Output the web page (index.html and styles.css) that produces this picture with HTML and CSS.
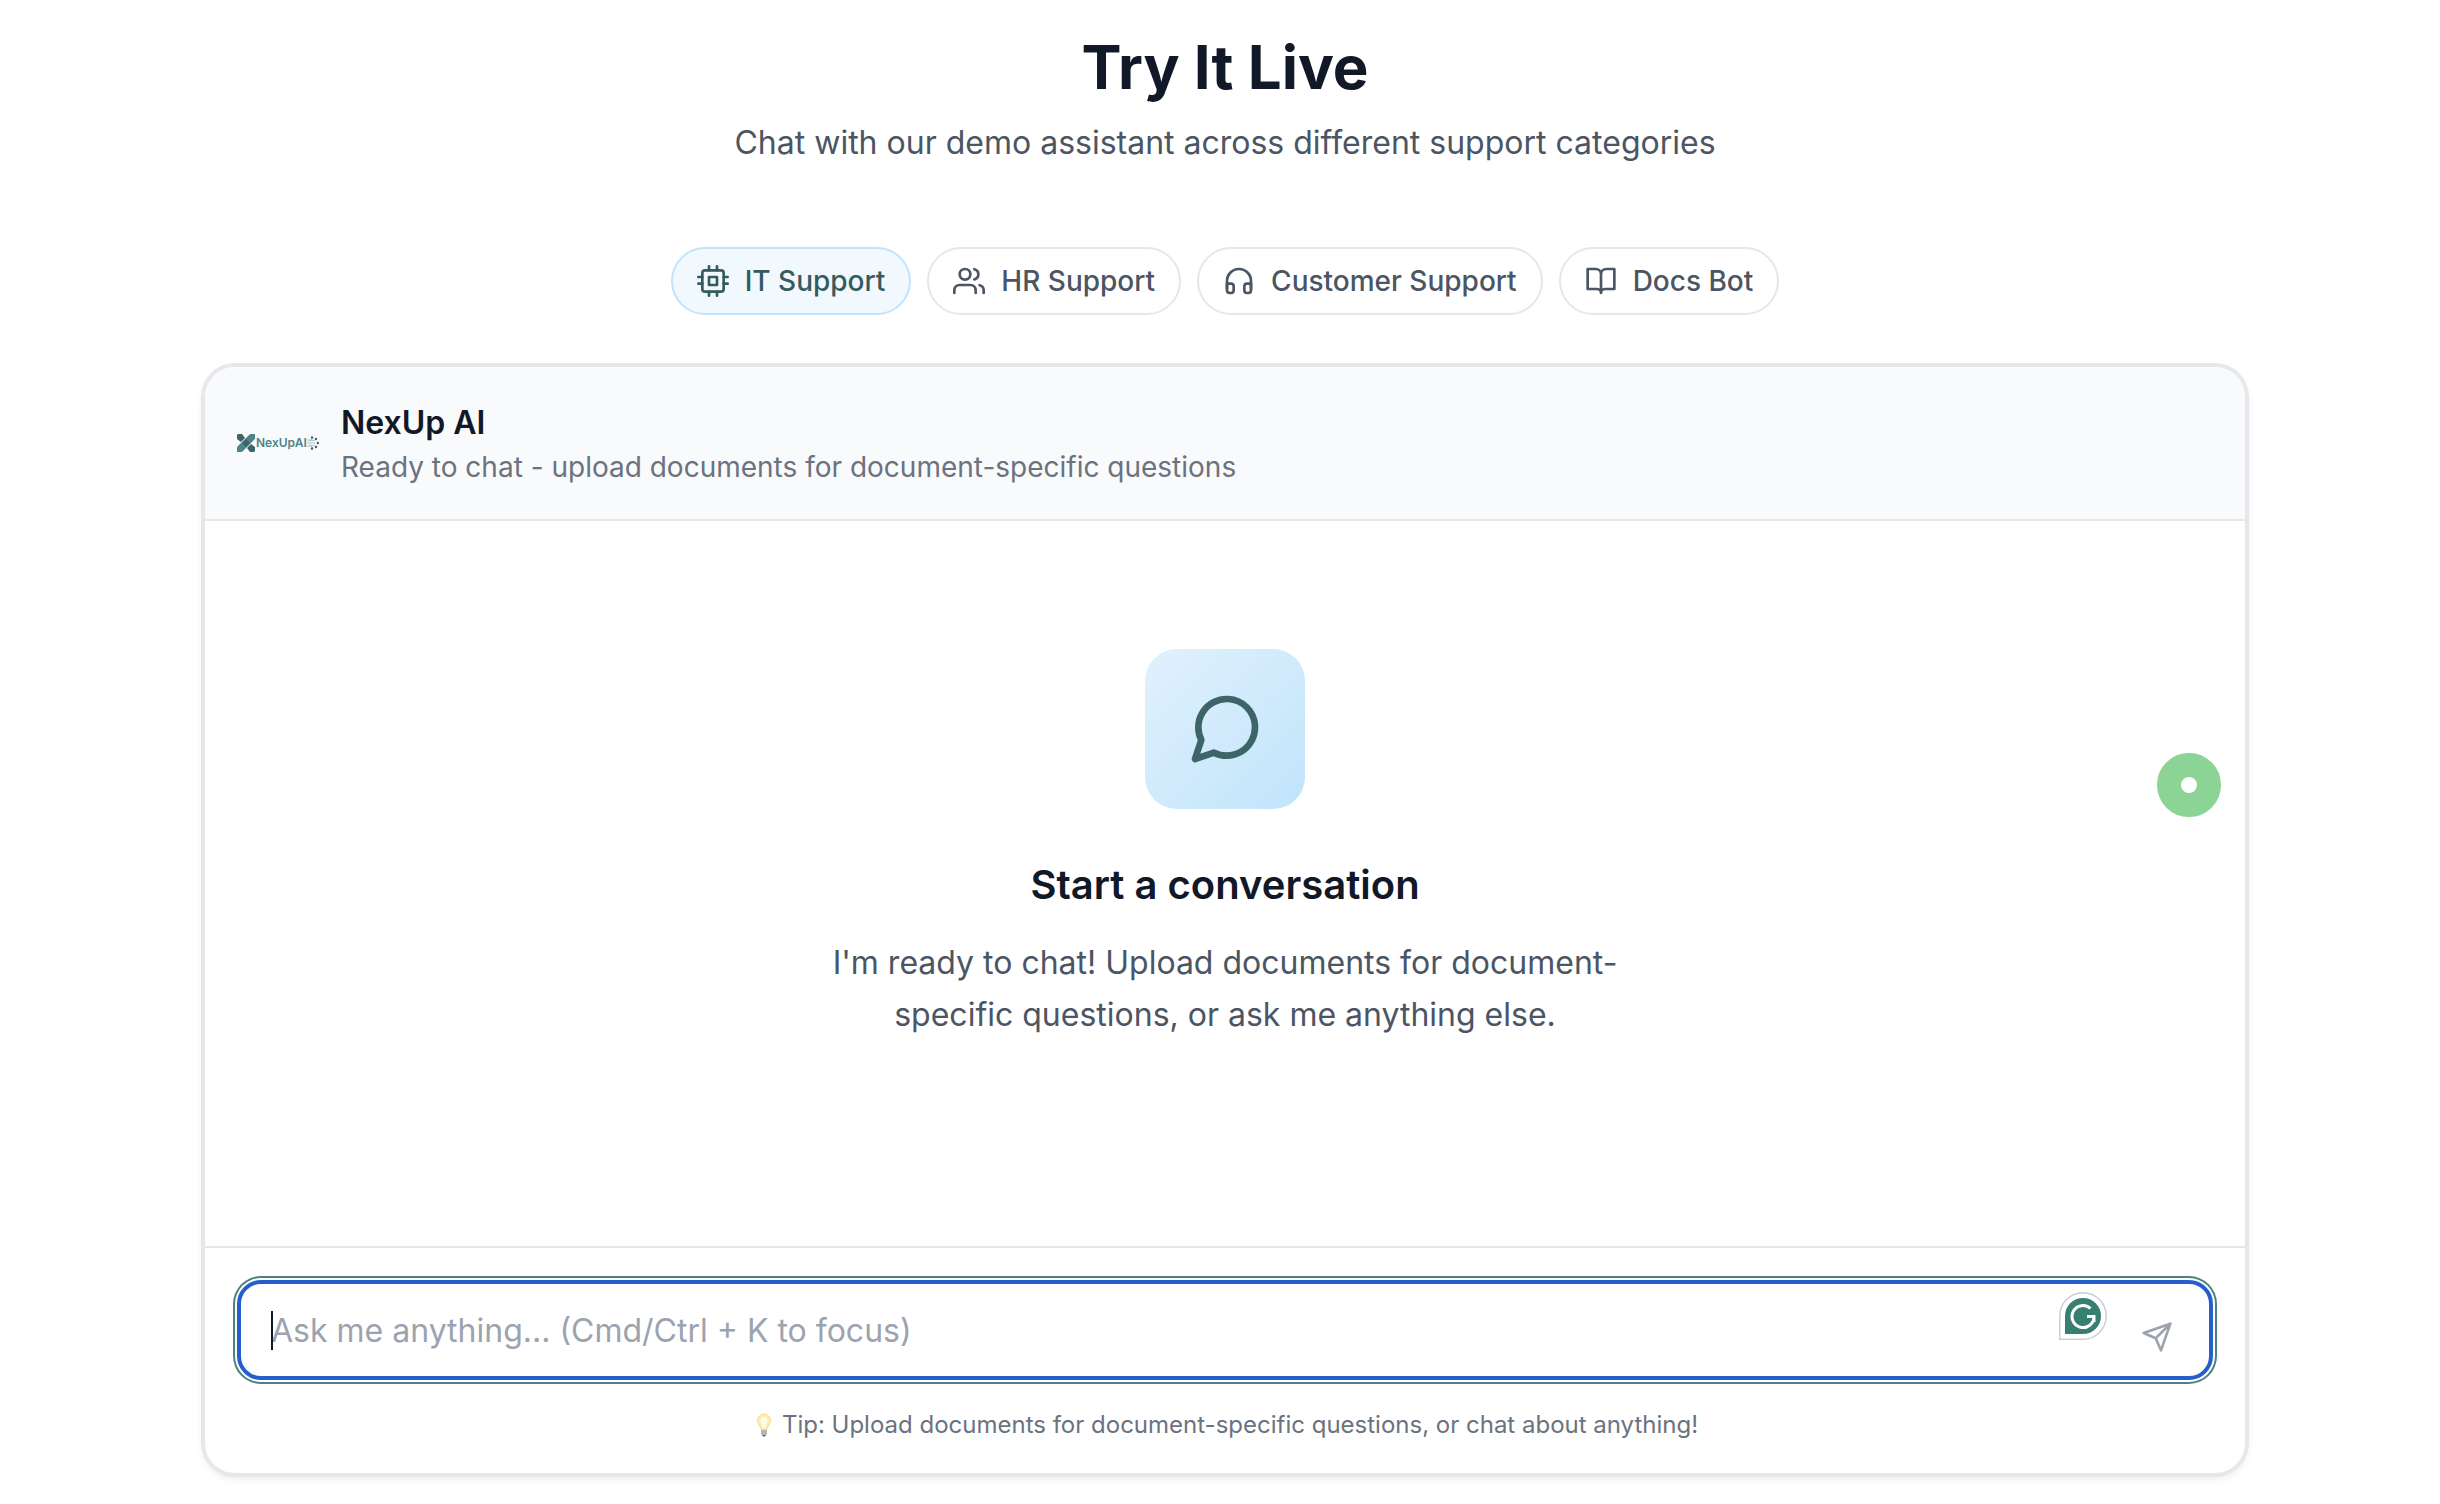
FILE: index.html
```html
<!DOCTYPE html>
<html lang="en">
<head>
<meta charset="utf-8">
<meta name="viewport" content="width=device-width, initial-scale=1">
<title>Try It Live</title>
<link rel="stylesheet" href="styles.css">
</head>
<body>
<main class="demo">
  <header class="intro">
    <h1 class="intro-title">Try It Live</h1>
    <p class="intro-text">Chat with our demo assistant across different support categories</p>
  </header>

  <nav class="tabs" aria-label="Support categories">
    <button type="button" class="tab tab-active">
      <svg class="icon" viewBox="0 0 24 24"><rect x="4" y="4" width="16" height="16" rx="2"/><rect x="9" y="9" width="6" height="6"/><path d="M9 1v3M15 1v3M9 20v3M15 20v3M20 9h3M20 14h3M1 9h3M1 14h3"/></svg>
      IT Support
    </button>
    <button type="button" class="tab">
      <svg class="icon" viewBox="0 0 24 24"><path d="M17 21v-2a4 4 0 0 0-4-4H5a4 4 0 0 0-4 4v2"/><circle cx="9" cy="7" r="4"/><path d="M23 21v-2a4 4 0 0 0-3-3.87M16 3.13a4 4 0 0 1 0 7.75"/></svg>
      HR Support
    </button>
    <button type="button" class="tab">
      <svg class="icon" viewBox="0 0 24 24"><path d="M3 18v-6a9 9 0 0 1 18 0v6"/><path d="M21 19a2 2 0 0 1-2 2h-1a2 2 0 0 1-2-2v-3a2 2 0 0 1 2-2h3zM3 19a2 2 0 0 0 2 2h1a2 2 0 0 0 2-2v-3a2 2 0 0 0-2-2H3z"/></svg>
      Customer Support
    </button>
    <button type="button" class="tab">
      <svg class="icon" viewBox="0 0 24 24"><path d="M2 3h6a4 4 0 0 1 4 4v14a3 3 0 0 0-3-3H2zM22 3h-6a4 4 0 0 0-4 4v14a3 3 0 0 1 3-3h7z"/></svg>
      Docs Bot
    </button>
  </nav>

  <section class="chat">
    <header class="chat-header">
      <div class="logo" aria-hidden="true">
        <svg class="logo-mark" viewBox="0 0 18 18"><path fill="#3c6469" d="M1 0h4l3 4-4 4-4-3V1zM17 18h-4l-3-4 4-4 4 3v4z"/><path fill="#4f8388" d="M12 1q1-1 2-1h4v4q0 1-1 2L6 17q-1 1-2 1H0v-4q0-1 1-2z"/><path fill="#3c6469" d="M9 5l4 4-4 4-4-4z"/></svg>
        <span class="logo-name">NexUpAI</span>
        <svg class="logo-dots" viewBox="0 0 12 14"><path stroke="#a9c3c6" d="M0 4h4l2-2M0 7h8M0 10h4l2 2M2 5l6-1M2 9l6 1"/><g fill="#3c6469"><circle cx="5" cy="1.500" r="1.200"/><circle cx="9" cy="3" r="1.200"/><circle cx="10.800" cy="7" r="1.200"/><circle cx="9" cy="11" r="1.200"/><circle cx="5" cy="12.500" r="1.200"/></g></svg>
      </div>
      <div>
        <h2 class="chat-name">NexUp AI</h2>
        <p class="chat-status">Ready to chat - upload documents for document-specific questions</p>
      </div>
    </header>

    <div class="chat-body">
      <div class="empty-icon">
        <svg viewBox="0 0 24 24"><path d="M21 11.500a8.380 8.380 0 0 1-.9 3.800 8.500 8.500 0 0 1-7.600 4.700 8.380 8.380 0 0 1-3.800-.9L3 21l1.900-5.700a8.380 8.380 0 0 1-.9-3.800 8.500 8.500 0 0 1 4.700-7.600 8.380 8.380 0 0 1 3.800-.9h.5a8.480 8.480 0 0 1 8 8v.5z"/></svg>
      </div>
      <h3 class="empty-title">Start a conversation</h3>
      <p class="empty-text">I'm ready to chat! Upload documents for document-specific questions, or ask me anything else.</p>
      <span class="recorder"></span>
    </div>

    <form class="composer">
      <div class="field">
        <input class="field-input" type="text" aria-label="Message" placeholder="Ask me anything... (Cmd/Ctrl + K to focus)">
        <span class="caret"></span>
        <svg class="grammar" viewBox="0 0 48 48"><path fill="#fff" stroke="#ccced9" stroke-width="1.500" d="M.75 47.250V24A23.250 23.250 0 1 1 24 47.250Z"/><path fill="#377f70" d="M6 42V24A18 18 0 1 1 24 42Z"/><path fill="none" stroke="#fff" stroke-width="3" d="M31.500 16.500A11 11 0 1 0 35 24.500H28M35 24.500V30"/></svg>
        <button type="button" class="send" aria-label="Send"><svg class="icon" viewBox="0 0 24 24"><path d="M22 2L11 13M22 2l-7 20-4-9-9-4z"/></svg></button>
      </div>
      <p class="tip"><svg class="bulb" viewBox="0 0 16 24"><path fill="#fbeeb0" stroke="#f3dc8c" d="M8 1a6.500 6.500 0 0 0-6.500 6.500c0 4 3 5 3.500 9h6c.5-4 3.500-5 3.500-9A6.500 6.500 0 0 0 8 1z"/><path fill="#fffbe8" d="M8 4c-3 0-4 3-3 6l2 5h2l2-5c1-3 0-6-3-6z"/><path fill="#b5b5b5" d="M5 17h6v4l-1 1H6l-1-1z"/><path fill="#666" d="M6 22h4l-1 1.500H7z"/></svg>Tip: Upload documents for document-specific questions, or chat about anything!</p>
    </form>
  </section>
</main>
</body>
</html>
```
FILE: styles.css
```css
* { box-sizing: border-box; margin: 0; }

body {
  background: #fff;
  color: #111827;
  font-family: Inter, "Liberation Sans", sans-serif;
}

.demo {
  padding: 32px 192px 29px 202px;
  display: flex;
  flex-direction: column;
  align-items: center;
}

.intro { text-align: center; }
.intro-title { font-size: 60px; line-height: 70px; font-weight: 700; }
.intro-text { margin-top: 15px; font-size: 32px; line-height: 52px; color: #4b5563; }

.tabs { display: flex; gap: 16px; margin: 78px 0 50px; }
.tab {
  display: flex;
  align-items: center;
  gap: 16px;
  padding: 12px 24px;
  border: 2px solid #e5e7eb;
  border-radius: 34px;
  background: #fff;
  color: #4b5563;
  font: 500 28px/40px Inter, "Liberation Sans", sans-serif;
}
.tab-active { background: #f1f8fe; border-color: #c0e4fb; color: #335c5f; }
.icon {
  display: block;
  width: 32px;
  height: 32px;
  fill: none;
  stroke: currentColor;
  stroke-width: 2;
  stroke-linecap: round;
  stroke-linejoin: round;
}

.chat {
  width: 100%;
  max-width: 2044px;
  border: 2px solid #e5e7eb;
  border-radius: 32px;
  box-shadow: 0 0 0 2px #e5e7eb, 0 4px 8px rgba(0, 0, 0, 0.08);
  overflow: hidden;
}
.chat-header {
  display: flex;
  align-items: center;
  gap: 24px;
  padding: 32px;
  background: #f9fafb;
  border-bottom: 2px solid #e5e7eb;
}
.logo { display: flex; align-items: center; width: 80px; }
.logo-mark { width: 18px; height: 18px; flex: none; }
.logo-name { font-size: 12px; line-height: 16px; font-weight: 600; color: #4f8388; margin-left: 1px; }
.logo-dots { width: 12px; height: 14px; flex: none; fill: none; }
.chat-name { font-size: 32px; line-height: 48px; font-weight: 600; }
.chat-status { font-size: 28px; line-height: 40px; color: #6b7280; }

.chat-body {
  position: relative;
  display: flex;
  flex-direction: column;
  align-items: center;
  padding: 128px 32px 205px;
  text-align: center;
}
.empty-icon {
  display: grid;
  place-items: center;
  width: 160px;
  height: 160px;
  border-radius: 32px;
  background: linear-gradient(135deg, #e1f1fd, #c0e4fb);
}
.empty-icon svg {
  width: 80px;
  height: 80px;
  fill: none;
  stroke: #3d6467;
  stroke-width: 2;
  stroke-linecap: round;
  stroke-linejoin: round;
}
.empty-title { margin-top: 48px; font-size: 40px; line-height: 56px; font-weight: 600; }
.empty-text { margin-top: 24px; max-width: 896px; font-size: 32px; line-height: 52px; color: #4b5563; }
.recorder {
  position: absolute;
  right: 24px;
  top: 232px;
  width: 64px;
  height: 64px;
  border: 24px solid #8cd495;
  border-radius: 50%;
}

.composer { padding: 32px; border-top: 2px solid #e5e7eb; }
.field { position: relative; }
.field-input {
  display: block;
  width: 100%;
  height: 100px;
  padding: 0 180px 0 30px;
  border: 4px solid #255fcb;
  border-radius: 24px;
  outline: 0;
  box-shadow: 0 0 0 2px #fff, 0 0 0 4px #4f8084;
  background: #fff;
  font: 400 32px/48px Inter, "Liberation Sans", sans-serif;
  color: #111827;
}
.field-input::placeholder { color: #9ca3af; opacity: 1; }
.caret { position: absolute; left: 34px; top: 31px; width: 2px; height: 39px; background: #111827; }
.grammar { position: absolute; right: 106px; top: 12px; width: 48px; height: 48px; }
.send {
  position: absolute;
  right: 40px;
  top: 41px;
  padding: 0;
  border: 0;
  background: none;
  color: #9ca3af;
}
.tip {
  display: flex;
  align-items: center;
  justify-content: center;
  gap: 10px;
  margin-top: 29px;
  padding-left: 4px;
  font-size: 24px;
  line-height: 32px;
  color: #6b7280;
}
.bulb { width: 16px; height: 24px; }
```
